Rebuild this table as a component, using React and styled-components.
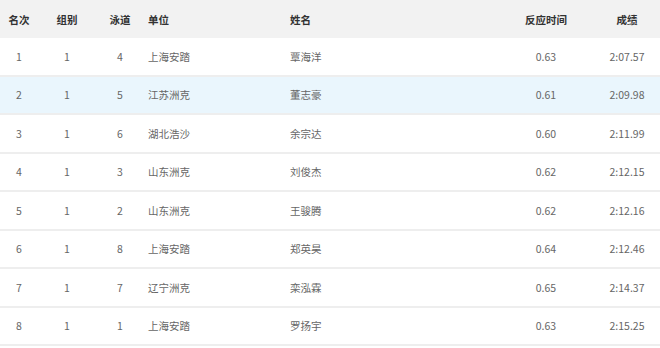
import React from 'react';
import styled, { createGlobalStyle } from 'styled-components';

const GlobalStyle = createGlobalStyle`
  html, body {
    margin: 0;
    padding: 0;
    background: #ffffff;
  }
  body {
    font-family: "Noto Sans CJK SC", "Noto Sans", sans-serif;
  }
`;

const Table = styled.div`
  width: 660px;
  display: flex;
  flex-direction: column;
`;

const Row = styled.div`
  display: grid;
  grid-template-columns: 38px 58px 48px 146px 208px 96px 66px;
  align-items: center;
  box-sizing: border-box;
  height: ${p => (p.$head ? '38px' : '38.5px')};
  background: ${p => (p.$head ? '#f2f2f2' : p.$active ? '#eaf6fd' : '#ffffff')};
  border-bottom: ${p => (p.$head ? 'none' : '2px solid #eeeeee')};
  color: ${p => (p.$head ? '#333333' : '#666666')};
  font-size: 10.5px;
  font-weight: ${p => (p.$head ? 700 : 400)};
`;

const Cell = styled.div`
  text-align: ${p => p.$align || 'center'};
  padding-left: ${p => p.$pad || 0}px;
  white-space: nowrap;
`;

const rows = [
  ['1', '1', '4', '上海安踏', '覃海洋', '0.63', '2:07.57'],
  ['2', '1', '5', '江苏洲克', '董志豪', '0.61', '2:09.98'],
  ['3', '1', '6', '湖北浩沙', '余宗达', '0.60', '2:11.99'],
  ['4', '1', '3', '山东洲克', '刘俊杰', '0.62', '2:12.15'],
  ['5', '1', '2', '山东洲克', '王骏腾', '0.62', '2:12.16'],
  ['6', '1', '8', '上海安踏', '郑英昊', '0.64', '2:12.46'],
  ['7', '1', '7', '辽宁洲克', '栾泓霖', '0.65', '2:14.37'],
  ['8', '1', '1', '上海安踏', '罗扬宇', '0.63', '2:15.25'],
];

const Line = ({ cells, head, active }) => (
  <Row $head={head} $active={active}>
    <Cell>{cells[0]}</Cell>
    <Cell>{cells[1]}</Cell>
    <Cell>{cells[2]}</Cell>
    <Cell $align="left" $pad={4}>{cells[3]}</Cell>
    <Cell $align="left">{cells[4]}</Cell>
    <Cell>{cells[5]}</Cell>
    <Cell>{cells[6]}</Cell>
  </Row>
);

export default function App() {
  return (
    <>
      <GlobalStyle />
      <Table>
        <Line head cells={['名次', '组别', '泳道', '单位', '姓名', '反应时间', '成绩']} />
        {rows.map((r, i) => (
          <Line key={i} cells={r} active={i === 1} />
        ))}
      </Table>
    </>
  );
}
